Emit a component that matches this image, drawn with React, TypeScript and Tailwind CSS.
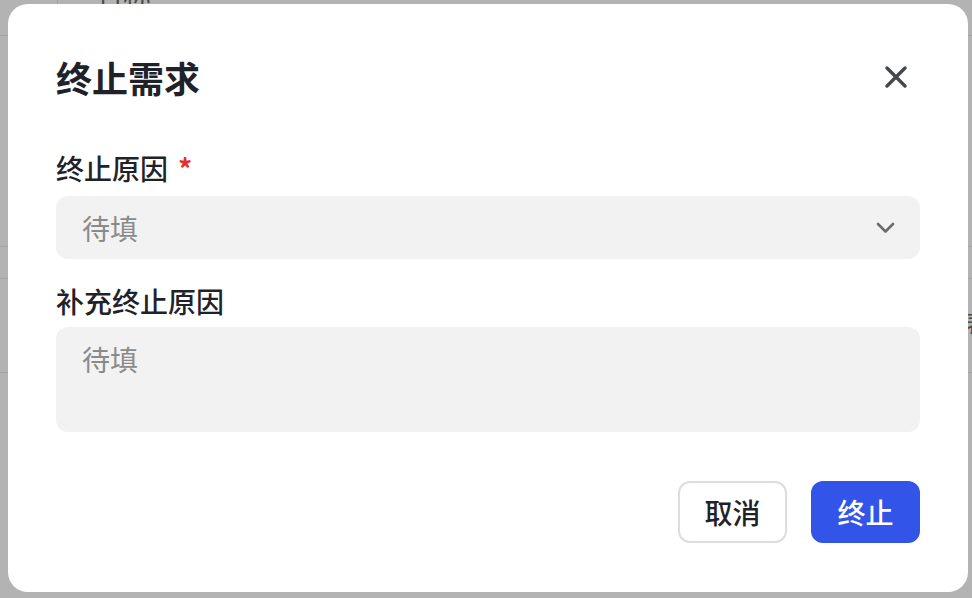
import React from "react";

const FONT = { fontFamily: '"Noto Sans CJK SC", "Noto Sans", sans-serif' };

export default function App() {
  return (
    <div className="relative w-[972px] h-[598px] overflow-hidden bg-[#b3b3b3]" style={FONT}>
      {/* page behind overlay */}
      <div className="flex flex-col w-full">
        <div className="h-[36px] border-b border-[#a3a3a3] relative flex">
          <div className="w-[58px] border-r border-[#a3a3a3]" />
          <div className="pl-[37px] -mt-[26px] text-[28px] leading-[40px] text-[#4a4a4a]">名称</div>
        </div>
        <div className="h-[211px] border-b border-[#a3a3a3]" />
        <div className="h-[32px] border-b border-[#a3a3a3]" />
        <div className="h-[94px] border-b border-[#a3a3a3] flex items-center">
          <div className="ml-[965px] text-[24px] leading-[30px] text-[#4a4a4a] -mt-[8px]">表</div>
        </div>
      </div>

      {/* modal */}
      <div className="absolute left-[8px] top-[4px] w-[960px] h-[588px] bg-white rounded-[20px] px-[48px] pt-[48px] flex flex-col">
        <div className="h-[50px] flex items-center justify-between">
          <div className="text-[36px] font-bold text-[#1f2329] leading-[50px]">终止需求</div>
          <svg width="22" height="22" viewBox="0 0 22 22" className="mr-[13px]">
            <path d="M2 2 L20 20 M20 2 L2 20" stroke="#45484d" strokeWidth="3.4" strokeLinecap="round" />
          </svg>
        </div>

        <div className="mt-[46px] h-[40px] flex items-center text-[28px] font-medium text-[#1f2329] leading-[40px]">
          终止原因<span className="ml-[10px] text-[#e8302a] font-bold">*</span>
        </div>
        <div className="mt-[8px] h-[63px] rounded-[12px] bg-[#f2f2f2] flex items-center justify-between pl-[26px] pr-[25px]">
          <span className="text-[28px] text-[#8a8a8a] leading-[40px]">待填</span>
          <svg width="19" height="12" viewBox="0 0 19 12">
            <path d="M2 2 L9.5 9.5 L17 2" fill="none" stroke="#6b6b6b" strokeWidth="2.6" strokeLinecap="round" strokeLinejoin="round" />
          </svg>
        </div>

        <div className="mt-[22px] h-[40px] flex items-center text-[28px] font-medium text-[#1f2329] leading-[40px]">
          补充终止原因
        </div>
        <div className="mt-[6px] h-[105px] rounded-[12px] bg-[#f2f2f2] pl-[26px] pt-[12px]">
          <span className="text-[28px] text-[#8a8a8a] leading-[40px]">待填</span>
        </div>

        <div className="mt-[49px] flex justify-end gap-[24px]">
          <button className="w-[109px] h-[62px] rounded-[12px] border-2 border-[#dcdde0] bg-white text-[28px] font-medium text-[#1f2329] leading-[40px]">
            取消
          </button>
          <button className="w-[109px] h-[62px] rounded-[12px] bg-[#3354e9] text-[28px] font-medium text-white leading-[40px]">
            终止
          </button>
        </div>
      </div>
    </div>
  );
}
